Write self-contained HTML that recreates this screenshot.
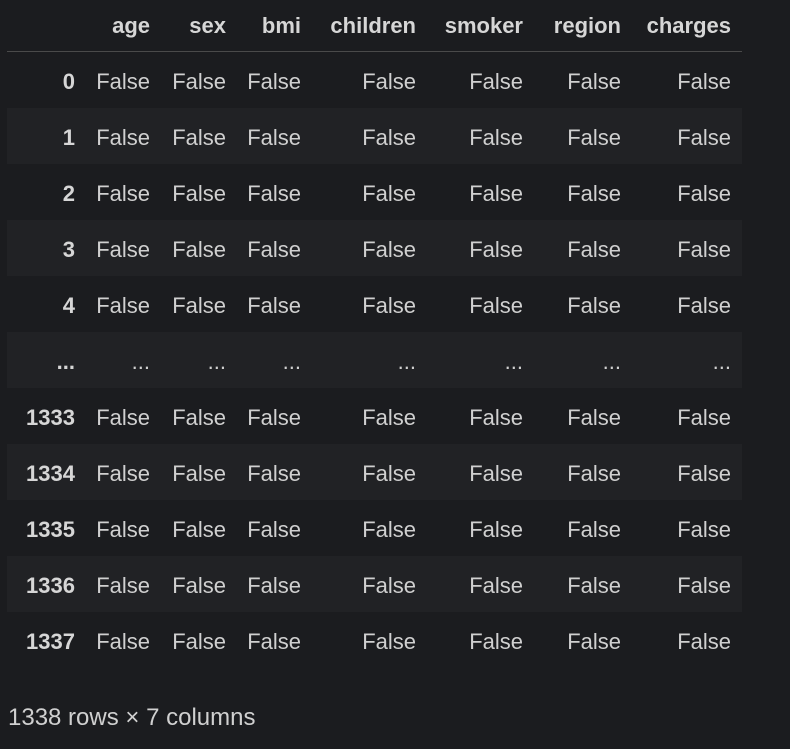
<!DOCTYPE html>
<html><head><style>
html,body{margin:0;background:#1b1c1f;}
body{width:790px;height:749px;overflow:hidden;position:relative;font-family:"Segoe UI","Liberation Sans",sans-serif;color:#d0d0d0;}
table{position:absolute;left:7px;top:0;border-collapse:collapse;table-layout:fixed;width:735px;font-size:22px;}
td,th{text-align:right;padding:0 11px 0 0;white-space:nowrap;}
thead th{height:51px;border-bottom:1px solid #4a4a4a;font-weight:bold;color:#d6d6d6;}
tbody tr{height:56px;}
tbody td,tbody th{padding-top:5px;box-sizing:border-box;}
tbody tr:nth-child(even){background:#212225;}
tbody th{font-weight:bold;color:#d6d6d6;}
.foot{position:absolute;left:8px;top:704px;font-size:24px;color:#d0d0d0;}
</style></head><body>
<table>
<colgroup><col style="width:79px"><col style="width:75px"><col style="width:76px"><col style="width:75px"><col style="width:115px"><col style="width:107px"><col style="width:98px"><col style="width:110px"></colgroup>
<thead><tr><th></th><th>age</th><th>sex</th><th>bmi</th><th>children</th><th>smoker</th><th>region</th><th>charges</th></tr></thead>
<tbody>
<tr><th>0</th><td>False</td><td>False</td><td>False</td><td>False</td><td>False</td><td>False</td><td>False</td></tr>
<tr><th>1</th><td>False</td><td>False</td><td>False</td><td>False</td><td>False</td><td>False</td><td>False</td></tr>
<tr><th>2</th><td>False</td><td>False</td><td>False</td><td>False</td><td>False</td><td>False</td><td>False</td></tr>
<tr><th>3</th><td>False</td><td>False</td><td>False</td><td>False</td><td>False</td><td>False</td><td>False</td></tr>
<tr><th>4</th><td>False</td><td>False</td><td>False</td><td>False</td><td>False</td><td>False</td><td>False</td></tr>
<tr><th>...</th><td>...</td><td>...</td><td>...</td><td>...</td><td>...</td><td>...</td><td>...</td></tr>
<tr><th>1333</th><td>False</td><td>False</td><td>False</td><td>False</td><td>False</td><td>False</td><td>False</td></tr>
<tr><th>1334</th><td>False</td><td>False</td><td>False</td><td>False</td><td>False</td><td>False</td><td>False</td></tr>
<tr><th>1335</th><td>False</td><td>False</td><td>False</td><td>False</td><td>False</td><td>False</td><td>False</td></tr>
<tr><th>1336</th><td>False</td><td>False</td><td>False</td><td>False</td><td>False</td><td>False</td><td>False</td></tr>
<tr><th>1337</th><td>False</td><td>False</td><td>False</td><td>False</td><td>False</td><td>False</td><td>False</td></tr>
</tbody></table>
<div class="foot">1338 rows × 7 columns</div>
</body></html>
